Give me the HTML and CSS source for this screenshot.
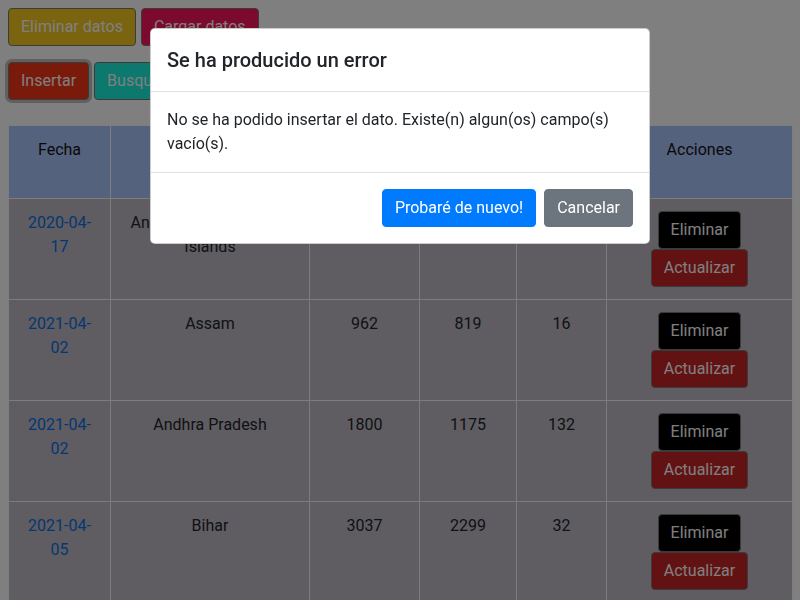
FILE: index.html
```html
<!DOCTYPE html>
<html lang="es">
<head>
<meta charset="utf-8">
<title>Datos</title>
<link rel="stylesheet" href="styles.css">
</head>
<body>
<div class="toolbar">
  <button class="btn btn-yellow">Eliminar datos</button>
  <button class="btn btn-pink">Cargar datos</button>
</div>
<div class="toolbar toolbar-second">
  <button class="btn btn-red btn-focus">Insertar</button>
  <button class="btn btn-teal">Busqueda</button>
</div>
<table class="data">
  <colgroup>
    <col class="c-date"><col class="c-state"><col class="c-num1"><col class="c-num2"><col class="c-num3"><col class="c-act">
  </colgroup>
  <thead>
    <tr><th>Fecha</th><th>Estado</th><th>Casos confirmados</th><th>Curados</th><th>Muertes</th><th>Acciones</th></tr>
  </thead>
  <tbody>
    <tr>
      <td><a class="date" href="#">2020-04-17</a></td><td>Andaman and Nicobar Islands</td><td>33</td><td>11</td><td>0</td>
      <td><div class="actions"><button class="btn btn-black">Eliminar</button><button class="btn btn-dred">Actualizar</button></div></td>
    </tr>
    <tr>
      <td><a class="date" href="#">2021-04-02</a></td><td>Assam</td><td>962</td><td>819</td><td>16</td>
      <td><div class="actions"><button class="btn btn-black">Eliminar</button><button class="btn btn-dred">Actualizar</button></div></td>
    </tr>
    <tr>
      <td><a class="date" href="#">2021-04-02</a></td><td>Andhra Pradesh</td><td>1800</td><td>1175</td><td>132</td>
      <td><div class="actions"><button class="btn btn-black">Eliminar</button><button class="btn btn-dred">Actualizar</button></div></td>
    </tr>
    <tr>
      <td><a class="date" href="#">2021-04-05</a></td><td>Bihar</td><td>3037</td><td>2299</td><td>32</td>
      <td><div class="actions"><button class="btn btn-black">Eliminar</button><button class="btn btn-dred">Actualizar</button></div></td>
    </tr>
  </tbody>
</table>

<div class="backdrop"></div>
<div class="modal">
  <div class="modal-header"><h5 class="modal-title">Se ha producido un error</h5></div>
  <div class="modal-body">No se ha podido insertar el dato. Existe(n) algun(os) campo(s) vacío(s).</div>
  <div class="modal-footer">
    <button class="btn btn-primary">Probaré de nuevo!</button>
    <button class="btn btn-secondary">Cancelar</button>
  </div>
</div>
</body>
</html>
```
FILE: styles.css
```css
html { overflow: hidden; }
body {
  margin: 0;
  padding: 8px;
  font-family: Roboto, "Liberation Sans", sans-serif;
  font-size: 16px;
  line-height: 1.5;
  color: #212529;
  background: #fff;
}
.toolbar { display: flex; gap: 5px; }
.toolbar-second { margin-top: 16px; }
.btn {
  font-family: inherit;
  font-size: 16px;
  line-height: 24px;
  padding: 6px 12px;
  border: 1px solid #777;
  border-radius: 4px;
  color: #fff;
  cursor: pointer;
}
.btn-yellow { background: #f5c81f; }
.btn-pink { background: #f8145c; }
.btn-red { background: #f23414; }
.btn-teal { background: #18f0dc; }
.btn-focus { box-shadow: 0 0 0 3px rgba(150,150,150,.6); }
.btn-black { background: #000; }
.btn-dred { background: #c42424; }

.data {
  margin-top: 25px;
  width: 784px;
  table-layout: fixed;
  border-collapse: collapse;
}
.c-date { width: 102px; }
.c-state { width: 199px; }
.c-num1 { width: 110px; }
.c-num2 { width: 97px; }
.c-num3 { width: 90px; }
.c-act { width: 186px; }
.data th, .data td {
  border: 1px solid #fafafa;
  padding: 12px;
  text-align: center;
  vertical-align: top;
  font-weight: 400;
}
.data th { background: #abc4fc; color: #111; overflow: hidden; }
.data td { background: #bebac4; }
.date { color: #0a6fe0; text-decoration: none; }
.actions { display: flex; flex-direction: column; align-items: center; }

.backdrop {
  position: fixed;
  inset: 0;
  background: rgba(0,0,0,.5);
}
.modal {
  position: fixed;
  top: 28px;
  left: 150px;
  width: 500px;
  box-sizing: border-box;
  background: #fff;
  border: 1px solid rgba(0,0,0,.2);
  border-radius: 5px;
}
.modal-header { padding: 16px; border-bottom: 1px solid #dee2e6; }
.modal-title { margin: 0; font-size: 20px; font-weight: 500; line-height: 1.5; }
.modal-body { padding: 16px; }
.modal-footer {
  padding: 12px;
  border-top: 1px solid #dee2e6;
  display: flex;
  justify-content: flex-end;
}
.modal-footer .btn { margin: 4px; }
.btn-primary { background: #007bff; border-color: #007bff; }
.btn-secondary { background: #6c757d; border-color: #6c757d; }
```
